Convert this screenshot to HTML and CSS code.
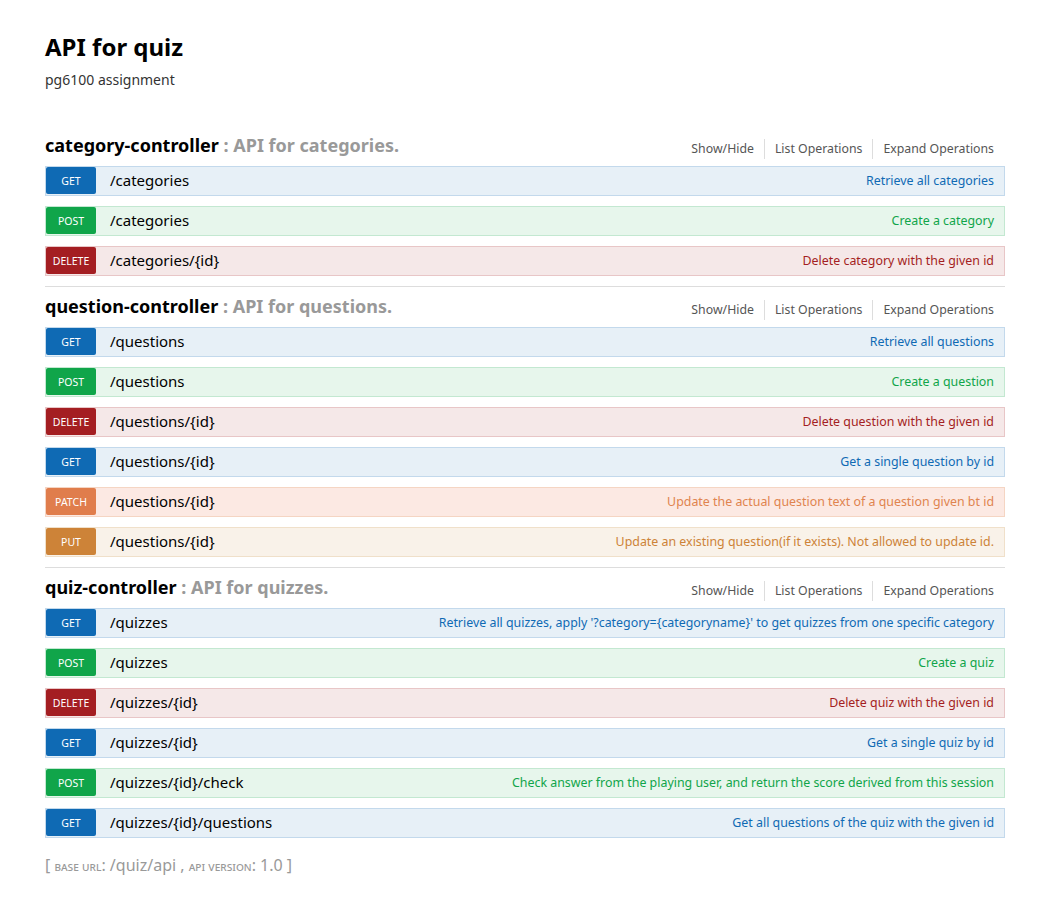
FILE: index.html
```html
<!DOCTYPE html>
<html>
<head>
<meta charset="utf-8">
<title>API for quiz</title>
<link rel="stylesheet" href="styles.css">
</head>
<body>
<div class="wrap">
  <div class="info">
    <h1 class="info-title">API for quiz</h1>
    <div class="info-desc">pg6100 assignment</div>
  </div>

  <ul class="resources">
    <li class="resource">
      <div class="res-heading">
        <h2><span class="res-name">category-controller</span> : API for categories.</h2>
        <ul class="options">
          <li>Show/Hide</li><li>List Operations</li><li>Expand Operations</li>
        </ul>
      </div>
      <ul class="ops">
        <li class="op get"><span class="method">GET</span><span class="path">/categories</span><span class="summary">Retrieve all categories</span></li>
        <li class="op post"><span class="method">POST</span><span class="path">/categories</span><span class="summary">Create a category</span></li>
        <li class="op delete"><span class="method">DELETE</span><span class="path">/categories/{id}</span><span class="summary">Delete category with the given id</span></li>
      </ul>
    </li>
    <li class="resource">
      <div class="res-heading">
        <h2><span class="res-name">question-controller</span> : API for questions.</h2>
        <ul class="options">
          <li>Show/Hide</li><li>List Operations</li><li>Expand Operations</li>
        </ul>
      </div>
      <ul class="ops">
        <li class="op get"><span class="method">GET</span><span class="path">/questions</span><span class="summary">Retrieve all questions</span></li>
        <li class="op post"><span class="method">POST</span><span class="path">/questions</span><span class="summary">Create a question</span></li>
        <li class="op delete"><span class="method">DELETE</span><span class="path">/questions/{id}</span><span class="summary">Delete question with the given id</span></li>
        <li class="op get"><span class="method">GET</span><span class="path">/questions/{id}</span><span class="summary">Get a single question by id</span></li>
        <li class="op patch"><span class="method">PATCH</span><span class="path">/questions/{id}</span><span class="summary">Update the actual question text of a question given bt id</span></li>
        <li class="op put"><span class="method">PUT</span><span class="path">/questions/{id}</span><span class="summary">Update an existing question(if it exists). Not allowed to update id.</span></li>
      </ul>
    </li>
    <li class="resource">
      <div class="res-heading">
        <h2><span class="res-name">quiz-controller</span> : API for quizzes.</h2>
        <ul class="options">
          <li>Show/Hide</li><li>List Operations</li><li>Expand Operations</li>
        </ul>
      </div>
      <ul class="ops">
        <li class="op get"><span class="method">GET</span><span class="path">/quizzes</span><span class="summary">Retrieve all quizzes, apply '?category={categoryname}' to get quizzes from one specific category</span></li>
        <li class="op post"><span class="method">POST</span><span class="path">/quizzes</span><span class="summary">Create a quiz</span></li>
        <li class="op delete"><span class="method">DELETE</span><span class="path">/quizzes/{id}</span><span class="summary">Delete quiz with the given id</span></li>
        <li class="op get"><span class="method">GET</span><span class="path">/quizzes/{id}</span><span class="summary">Get a single quiz by id</span></li>
        <li class="op post"><span class="method">POST</span><span class="path">/quizzes/{id}/check</span><span class="summary">Check answer from the playing user, and return the score derived from this session</span></li>
        <li class="op get"><span class="method">GET</span><span class="path">/quizzes/{id}/questions</span><span class="summary">Get all questions of the quiz with the given id</span></li>
      </ul>
    </li>
  </ul>

  <div class="footer">[ <span class="label">base url</span>: /quiz/api , <span class="label">api version</span>: 1.0 ]</div>
</div>
</body>
</html>
```

FILE: styles.css
```css
* { box-sizing: border-box; }
body {
  margin: 0;
  background: #fff;
  font-family: "Noto Sans", "Open Sans", sans-serif;
  color: #333;
}
.wrap {
  width: 960px;
  margin-left: 45px;
  padding-top: 32px;
}
.info-title {
  margin: 0;
  font-size: 24px;
  line-height: 30px;
  font-weight: bold;
  color: #000;
}
.info-desc {
  margin-top: 8px;
  font-size: 14px;
  line-height: 20px;
  color: #333;
}
.resources {
  list-style: none;
  margin: 36px 0 0 0;
  padding: 0;
}
.resource {
  border-bottom: 1px solid #ddd;
}
.resource:last-child { border-bottom: none; }
.res-heading {
  height: 40px;
  display: flex;
  align-items: center;
  justify-content: space-between;
}
.res-heading h2 {
  margin: 0 0 2px 0;
  font-size: 18px;
  line-height: 24px;
  font-weight: bold;
  color: #999;
}
.res-name { color: #000; }
.options {
  list-style: none;
  margin: 6px 11px 0 0;
  padding: 0;
  display: flex;
}
.options li {
  padding: 2px 10px;
  border-right: 1px solid #ddd;
  font-size: 12.3px;
  line-height: 16px;
  color: #555;
}
.options li:last-child { border-right: none; padding-right: 0; }
.ops {
  list-style: none;
  margin: 0;
  padding: 0;
}
.op {
  height: 30px;
  margin-bottom: 10px;
  border: 1px solid;
  display: flex;
  align-items: flex-start;
}
.method {
  width: 50px;
  height: 27px;
  flex: none;
  border-radius: 2px;
  color: #fff;
  font-size: 10.5px;
  line-height: 29px;
  text-align: center;
  text-transform: uppercase;
}
.path {
  padding-left: 14px;
  font-size: 15px;
  line-height: 26px;
  color: #000;
}
.summary {
  margin-left: auto;
  padding-right: 10px;
  font-size: 12.4px;
  line-height: 28px;
}
.get { background: #e7f0f7; border-color: #c3d9ec; }
.get .method { background: #0f6ab4; }
.get .summary { color: #0f6ab4; }
.post { background: #e7f6ec; border-color: #c3e8d1; }
.post .method { background: #10a54a; }
.post .summary { color: #10a54a; }
.delete { background: #f5e8e8; border-color: #e8c6c7; }
.delete .method { background: #a41e22; }
.delete .summary { color: #a41e22; }
.patch { background: #fce9e3; border-color: #f5d5c3; }
.patch .method { background: #e07d4c; }
.patch .summary { color: #e0844f; }
.put { background: #f9f2e9; border-color: #f0e0ca; }
.put .method { background: #cd8338; }
.put .summary { color: #cd8338; }
.footer {
  margin-top: 17px;
  font-size: 16px;
  line-height: 20px;
  color: #999;
}
.footer .label {
  font-variant: small-caps;
  font-size: 12.5px;
}
```
